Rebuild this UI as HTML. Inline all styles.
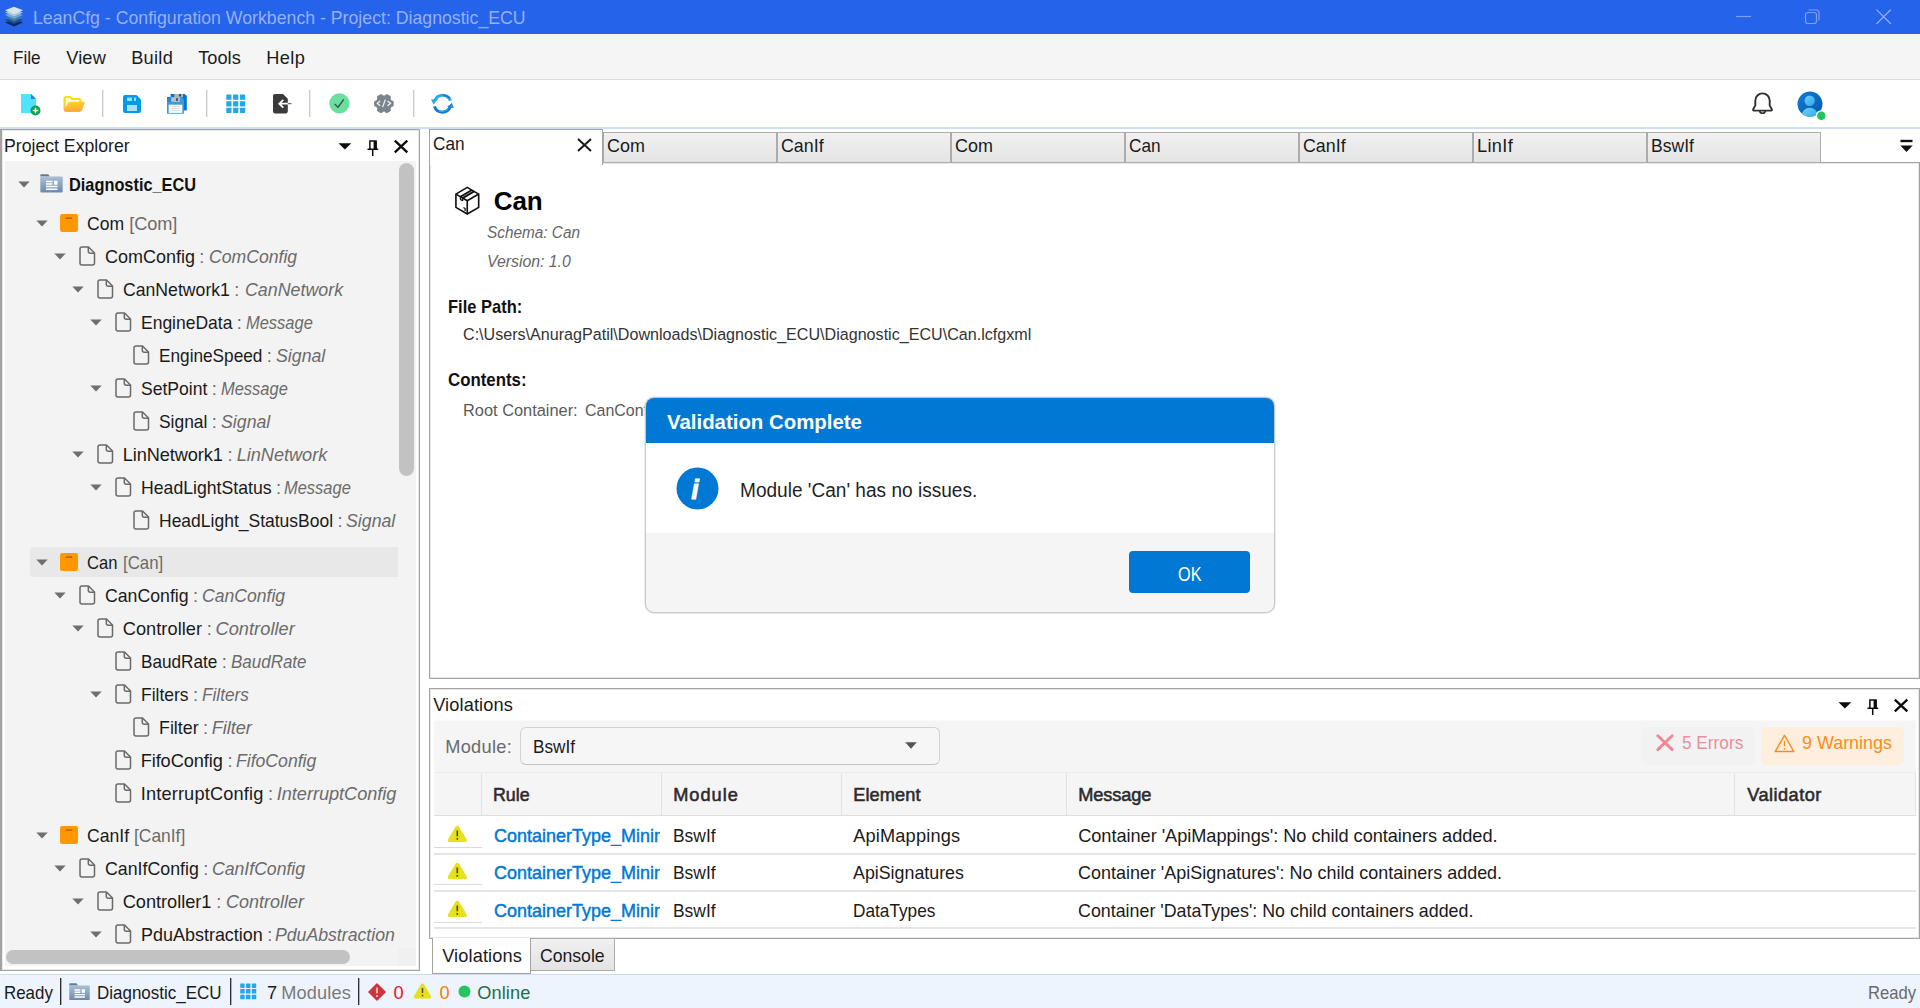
<!DOCTYPE html>
<html lang="en"><head><meta charset="utf-8"><title>LeanCfg - Configuration Workbench - Project: Diagnostic_ECU</title>
<style>
html,body{margin:0;padding:0;}
body{width:1920px;height:1008px;position:relative;overflow:hidden;background:#fff;font-family:"Liberation Sans",sans-serif;}
.t{position:absolute;white-space:pre;display:block;}
div,svg{box-sizing:border-box;}
svg{position:absolute;overflow:visible;}
</style></head><body>
<div style="position:absolute;left:0px;top:0px;width:1920px;height:34px;background:#2563eb;"></div><svg style="left:4px;top:6px" width="20" height="21" viewBox="0 0 20 21">
<path d="M10 13 L19 16.5 L10 20.5 L1 16.5Z" fill="#0d2b5e"/>
<path d="M10 10.5 L19 14 L10 18 L1 14Z" fill="#1d4f91"/>
<path d="M10 8 L19 11.5 L10 15.5 L1 11.5Z" fill="#3b78b8"/>
<path d="M10 5.5 L19 9 L10 13 L1 9Z" fill="#6fa3cf"/>
<path d="M10 3 L19 6.5 L10 10.5 L1 6.5Z" fill="#a4c8df"/>
<path d="M10 0.8 L19 4.3 L10 8.3 L1 4.3Z" fill="#d5e6ea"/>
</svg><span class="t" style="left:33.2px;top:8px;font-size:18.2px;line-height:20px;transform:scaleX(0.9733);transform-origin:0 0;color:#97b0f4;">LeanCfg - Configuration Workbench - Project: Diagnostic_ECU</span><svg style="left:1730px;top:5px" width="170" height="24" viewBox="0 0 170 24" fill="none" stroke="#7f9ff2" stroke-width="1.2">
<path d="M6 11.5 H21"/>
<rect x="75.5" y="7.5" width="11" height="11" rx="2.5"/><path d="M78.5 5 H86 a3 3 0 0 1 3 3 V15.5"/>
<path d="M146.5 4.6 L160.8 18.9 M160.8 4.6 L146.5 18.9" stroke="#9fb6f6" stroke-width="1.25"/>
</svg><div style="position:absolute;left:0px;top:34px;width:1920px;height:46px;background:#f5f5f5;border-bottom:1px solid #dcdcdc;"></div><span class="t" style="left:13.2px;top:48px;font-size:18.2px;line-height:20px;transform:scaleX(0.9416);transform-origin:0 0;color:#1b1b1b;">File</span><span class="t" style="left:66.2px;top:48px;font-size:18.2px;line-height:20px;letter-spacing:0.169px;color:#1b1b1b;">View</span><span class="t" style="left:131.2px;top:48px;font-size:18.2px;line-height:20px;letter-spacing:0.287px;color:#1b1b1b;">Build</span><span class="t" style="left:198.2px;top:48px;font-size:18.2px;line-height:20px;letter-spacing:0.033px;color:#1b1b1b;">Tools</span><span class="t" style="left:266.2px;top:48px;font-size:18.2px;line-height:20px;letter-spacing:0.398px;color:#1b1b1b;">Help</span><div style="position:absolute;left:0px;top:80px;width:1920px;height:48px;background:#fff;"></div><div style="position:absolute;left:0px;top:127px;width:1920px;height:2px;background:#cfe0f5;"></div><div style="position:absolute;left:102px;top:90px;width:2px;height:27px;background:linear-gradient(90deg,#cbcbcb 50%,#ececec 50%);"></div><div style="position:absolute;left:206px;top:90px;width:2px;height:27px;background:linear-gradient(90deg,#cbcbcb 50%,#ececec 50%);"></div><div style="position:absolute;left:309px;top:90px;width:2px;height:27px;background:linear-gradient(90deg,#cbcbcb 50%,#ececec 50%);"></div><div style="position:absolute;left:413px;top:90px;width:2px;height:27px;background:linear-gradient(90deg,#cbcbcb 50%,#ececec 50%);"></div><svg style="left:20px;top:93px" width="22" height="24" viewBox="0 0 22 24">
<path d="M1 1 H11 L16 6 V20 H1Z" fill="#4fe3ff"/><path d="M11 1 L16 6 H11Z" fill="#2f7fd9"/>
<circle cx="15.5" cy="17.5" r="5" fill="#10a050"/><path d="M15.5 14.7 V20.3 M12.7 17.5 H18.3" stroke="#fff" stroke-width="1.4"/></svg><svg style="left:63px;top:95px" width="23" height="18" viewBox="0 0 23 18">
<defs><linearGradient id="fo" x1="0" y1="0" x2="0" y2="1"><stop offset="0" stop-color="#ffd21f"/><stop offset="1" stop-color="#ffa53c"/></linearGradient>
<linearGradient id="fb" x1="0" y1="0" x2="0" y2="1"><stop offset="0" stop-color="#fbe200"/><stop offset="0.55" stop-color="#ffd12a"/><stop offset="1" stop-color="#ffab3a"/></linearGradient></defs>
<path d="M0.5 3.6 a2.6 2.6 0 0 1 2.6 -2.6 H6.8 a2 2 0 0 1 1.4 0.6 L9.6 2.9 H15.9 a2.6 2.6 0 0 1 2.6 2.6 V14 a2.8 2.8 0 0 1 -2.8 2.8 H3.3 a2.8 2.8 0 0 1 -2.8 -2.8Z" fill="url(#fb)"/>
<path d="M2.7 4 a0.9 0.9 0 0 1 0.9 -0.9 H6.6 L8.6 5 H15.6 a0.8 0.8 0 0 1 0.8 0.8 V8 H5.5 L2.7 13Z" fill="#fffbe3"/>
<path d="M7.2 6.8 H20.6 a1.1 1.1 0 0 1 1.05 1.45 L19.1 15 a2.7 2.7 0 0 1 -2.5 1.8 H3.3 a2.8 2.8 0 0 1 -2.4 -1.4 L2.2 14.6 L4.6 8.6 a2.8 2.8 0 0 1 2.6 -1.8Z" fill="url(#fo)"/></svg><svg style="left:123px;top:95px" width="18" height="18" viewBox="0 0 18 18">
<path d="M0 2 a2 2 0 0 1 2-2 H13.5 L18 4.5 V16 a2 2 0 0 1 -2 2 H2 a2 2 0 0 1 -2-2Z" fill="#039be5"/>
<rect x="4" y="2.5" width="5" height="3.5" fill="#9bdcfb"/><rect x="11" y="2.5" width="2" height="3.5" fill="#9bdcfb"/>
<rect x="4" y="10" width="10" height="6" fill="#a9e0ff"/></svg><svg style="left:166px;top:93px" width="22" height="22" viewBox="0 0 22 22">
<path d="M4.6 0.9 H18.6 L20.8 3.1 V17.6 H4.6Z" fill="#0277c8"/>
<rect x="8.3" y="0.9" width="8.7" height="3.3" fill="#a9b4bc"/><rect x="13" y="1.2" width="2.1" height="2.2" fill="#39444e"/>
<path d="M1 4 H15.5 L17.9 6.4 V20.7 H1Z" fill="#3a9be3"/><rect x="1" y="4" width="4.4" height="5" fill="#2b88cf"/>
<rect x="5.2" y="4.2" width="8.6" height="4.7" fill="#b6c0c8"/><rect x="10" y="5" width="1.9" height="2.9" rx="0.4" fill="#46525c"/>
<rect x="2.7" y="11.7" width="13.6" height="8.2" fill="#fff"/><path d="M4.6 13.4 H14.4 M4.6 15.5 H14.4 M4.6 17.6 H14.4" stroke="#d3d8dc" stroke-width="0.9"/></svg><svg style="left:226px;top:94px" width="20" height="20" viewBox="0 0 20 20" fill="#22a7ea"><rect x="0.3" y="0.6" width="5.2" height="5.2" rx="0.4"/><rect x="7.1" y="0.6" width="5.2" height="5.2" rx="0.4"/><rect x="13.9" y="0.6" width="5.2" height="5.2" rx="0.4"/><rect x="0.3" y="7.199999999999999" width="5.2" height="5.2" rx="0.4"/><rect x="7.1" y="7.199999999999999" width="5.2" height="5.2" rx="0.4"/><rect x="13.9" y="7.199999999999999" width="5.2" height="5.2" rx="0.4"/><rect x="0.3" y="13.799999999999999" width="5.2" height="5.2" rx="0.4"/><rect x="7.1" y="13.799999999999999" width="5.2" height="5.2" rx="0.4"/><rect x="13.9" y="13.799999999999999" width="5.2" height="5.2" rx="0.4"/></svg><svg style="left:273px;top:94px" width="19" height="20" viewBox="0 0 19 20">
<path d="M0 1.8 a1.8 1.8 0 0 1 1.8-1.8 H10 L14.8 4.8 V17.6 a1.8 1.8 0 0 1 -1.8 1.8 H1.8 a1.8 1.8 0 0 1 -1.8-1.8Z" fill="#3b3b3b"/>
<path d="M18.3 9.7 H6.5 M10.3 5.8 L6.2 9.7 L10.3 13.6" stroke="#fff" stroke-width="1.7" fill="none"/><path d="M14.8 9.7 H18.5" stroke="#3b3b3b" stroke-width="0.9"/></svg><svg style="left:328.6px;top:93.4px" width="21" height="21" viewBox="0 0 21 21"><circle cx="10.4" cy="10.3" r="10.1" fill="#69e0a0"/>
<path d="M5.6 10.9 L9 14.2 L14.8 6.4" stroke="#3d4a44" stroke-width="1.3" fill="none"/></svg><svg style="left:373px;top:93px" width="22" height="22" viewBox="0 0 22 22">
<g fill="#7a848d"><circle cx="10.9" cy="10.65" r="8.2"/><rect x="7.7" y="0.85" width="6.4" height="6" rx="1.9" transform="rotate(30 10.9 10.65)"/><rect x="7.7" y="0.85" width="6.4" height="6" rx="1.9" transform="rotate(90 10.9 10.65)"/><rect x="7.7" y="0.85" width="6.4" height="6" rx="1.9" transform="rotate(150 10.9 10.65)"/><rect x="7.7" y="0.85" width="6.4" height="6" rx="1.9" transform="rotate(210 10.9 10.65)"/><rect x="7.7" y="0.85" width="6.4" height="6" rx="1.9" transform="rotate(270 10.9 10.65)"/><rect x="7.7" y="0.85" width="6.4" height="6" rx="1.9" transform="rotate(330 10.9 10.65)"/></g>
<path d="M7.2 8 L4.3 10.35 L7.2 12.7 M14.6 8 L17.5 10.35 L14.6 12.7 M12.3 6.6 L9.6 14.1" stroke="#eef1f3" stroke-width="1.3" fill="none"/></svg><svg style="left:431px;top:93px" width="23" height="21" viewBox="0 0 23 21" fill="none">
<path d="M19.5 7.6 A8.4 8.4 0 0 0 3.9 7.4" stroke="#2aa9e6" stroke-width="3"/>
<path d="M18.6 5.2 A8.4 8.4 0 0 0 12 2.2" stroke="#1479d2" stroke-width="1.4"/>
<path d="M3.4 13.4 A8.4 8.4 0 0 0 19.3 13.6" stroke="#1479d2" stroke-width="3"/>
<path d="M8 17.6 A8.4 8.4 0 0 0 17.2 15.8" stroke="#2aa9e6" stroke-width="1.4"/>
<path d="M0 6.6 L6.9 6 L2.6 11.4Z" fill="#2aa9e6"/>
<path d="M22.9 14.9 L16.1 13.9 L20.9 9.7Z" fill="#1d8fde"/></svg><svg style="left:1751px;top:92px" width="23" height="24" viewBox="0 0 23 24" fill="none" stroke="#303030" stroke-width="1.9" stroke-linejoin="round">
<path d="M11.5 1.4 a7.2 7.2 0 0 1 7.2 7.2 V13.4 L20.9 17.5 a0.8 0.8 0 0 1 -0.7 1.1 H2.8 a0.8 0.8 0 0 1 -0.7 -1.1 L4.3 13.4 V8.6 a7.2 7.2 0 0 1 7.2-7.2Z"/>
<path d="M8.6 19 a3 3 0 0 0 5.8 0" stroke-width="1.7"/></svg><svg style="left:1797.2px;top:90.6px" width="28" height="28" viewBox="0 0 28 28">
<defs><linearGradient id="ua" x1="0" y1="0" x2="1" y2="1"><stop offset="0" stop-color="#0f7bd6"/><stop offset="1" stop-color="#0659ad"/></linearGradient>
<linearGradient id="ub" x1="0" y1="0" x2="1" y2="1"><stop offset="0" stop-color="#72d2fb"/><stop offset="1" stop-color="#2aa3e6"/></linearGradient>
<clipPath id="uc"><circle cx="13" cy="13.1" r="12.5"/></clipPath></defs>
<circle cx="13" cy="13.1" r="12.5" fill="url(#ua)"/>
<g clip-path="url(#uc)"><circle cx="12.7" cy="9.7" r="5.2" fill="url(#ub)"/><path d="M4.8 24.5 a8 7.8 0 0 1 16 0 V28 H4.8Z" fill="url(#ub)"/></g>
<circle cx="24.3" cy="24.7" r="4.9" fill="#22c55e" stroke="#fff" stroke-width="1.2"/></svg><div style="position:absolute;left:0px;top:129px;width:420px;height:842px;background:#fff;border:1px solid #a3a3a3;border-left-width:2px;box-shadow:inset 0 0 0 1px rgba(150,150,150,0.22);"></div><span class="t" style="left:4.2px;top:136px;font-size:18.2px;line-height:20px;transform:scaleX(0.9707);transform-origin:0 0;color:#1a1a1a;">Project Explorer</span><svg style="left:338px;top:139px" width="72" height="18" viewBox="0 0 72 18">
<path d="M0.5 4.2 H13.3 L6.9 10.6Z" fill="#0c0c0c"/>
<path d="M31.9 10 V2 H38 V10 M29.5 10.3 H40.2 M34.7 10.5 V17" stroke="#0c0c0c" stroke-width="1.5" fill="none"/><rect x="35.6" y="2" width="3.1" height="8" fill="#0c0c0c"/>
<path d="M56.8 1.6 L69.3 13.4 M69.3 1.6 L56.8 13.4" stroke="#0c0c0c" stroke-width="2.3" fill="none"/></svg><div style="position:absolute;left:5px;top:161px;width:411px;height:805px;background:#f3f3f3;"></div><div style="position:absolute;left:399px;top:163px;width:15px;height:313px;background:#c2c2c2;border-radius:7.5px;"></div><div style="position:absolute;left:6px;top:950px;width:344px;height:14px;background:#c2c2c2;border-radius:7px;"></div><div style="position:absolute;left:398px;top:948px;width:18px;height:18px;background:#f0f0f0;"></div><div style="position:absolute;left:30px;top:547px;width:368px;height:30px;background:#e8e8e8;border-radius:4px 0 0 4px;"></div><svg style="left:18px;top:180.5px" width="12" height="7" viewBox="0 0 12 7"><path d="M0.3 0.4 H11.7 L6 6.6Z" fill="#6e6e6e"/></svg><svg style="left:40px;top:174px" width="23" height="19" viewBox="0 0 23 19">
<defs><linearGradient id="pg1" x1="0" y1="0" x2="0" y2="1"><stop offset="0" stop-color="#a9bfd8"/><stop offset="1" stop-color="#6d8aaa"/></linearGradient></defs>
<path d="M0.3 1.2 a1 1 0 0 1 1-1 H8.2 L10 2.6 H0.3Z" fill="#5f7d8e"/>
<rect x="0.3" y="2.6" width="22.4" height="16" rx="1" fill="url(#pg1)"/>
<path d="M6 7.6 H12.5 M6 10 H12.5 M6 12.6 H17.5 M6 15.2 H17.5" stroke="#fff" stroke-width="1.5"/><rect x="14" y="6.8" width="3.5" height="3.9" fill="#fff"/></svg><span class="t" style="left:69.2px;top:175px;font-size:18.2px;line-height:20px;transform:scaleX(0.8982);transform-origin:0 0;color:#111;font-weight:bold;">Diagnostic_ECU</span><svg style="left:36px;top:219.5px" width="12" height="7" viewBox="0 0 12 7"><path d="M0.3 0.4 H11.7 L6 6.6Z" fill="#6e6e6e"/></svg><svg style="left:60px;top:214px" width="18" height="18" viewBox="0 0 18 18"><rect x="0" y="0" width="18" height="18" rx="2.2" fill="#ff9800"/><rect x="5.6" y="3.3" width="6.6" height="1.7" fill="#b86a00"/></svg><span class="t" style="left:86.7px;top:214px;font-size:18.2px;line-height:20px;transform:scaleX(0.9660);transform-origin:0 0;color:#1a1a1a;">Com</span><span class="t" style="left:129.2px;top:214px;font-size:18.2px;line-height:20px;letter-spacing:-0.104px;color:#6b6b6b;">[Com]</span><svg style="left:54px;top:252.5px" width="12" height="7" viewBox="0 0 12 7"><path d="M0.3 0.4 H11.7 L6 6.6Z" fill="#6e6e6e"/></svg><svg style="left:78.5px;top:246px" width="17" height="20" viewBox="0 0 17 20" fill="none" stroke="#6a6a6a" stroke-width="1.5" stroke-linejoin="round"><path d="M3 1 H9.5 L15.5 7 V17 a2 2 0 0 1 -2 2 H3 a2 2 0 0 1 -2-2 V3 a2 2 0 0 1 2-2Z"/><path d="M9.3 1.2 V5.2 a2 2 0 0 0 2 2 H15.3"/></svg><span class="t" style="left:104.7px;top:247px;font-size:18.2px;line-height:20px;transform:scaleX(0.9881);transform-origin:0 0;color:#1a1a1a;">ComConfig</span><span class="t" style="left:199.3px;top:247px;font-size:18.2px;line-height:20px;color:#6b6b6b;">:</span><span class="t" style="left:208.7px;top:247px;font-size:18.2px;line-height:20px;transform:scaleX(0.9683);transform-origin:0 0;color:#6b6b6b;font-style:italic;">ComConfig</span><svg style="left:72px;top:285.5px" width="12" height="7" viewBox="0 0 12 7"><path d="M0.3 0.4 H11.7 L6 6.6Z" fill="#6e6e6e"/></svg><svg style="left:96.5px;top:279px" width="17" height="20" viewBox="0 0 17 20" fill="none" stroke="#6a6a6a" stroke-width="1.5" stroke-linejoin="round"><path d="M3 1 H9.5 L15.5 7 V17 a2 2 0 0 1 -2 2 H3 a2 2 0 0 1 -2-2 V3 a2 2 0 0 1 2-2Z"/><path d="M9.3 1.2 V5.2 a2 2 0 0 0 2 2 H15.3"/></svg><span class="t" style="left:122.7px;top:280px;font-size:18.2px;line-height:20px;transform:scaleX(0.9702);transform-origin:0 0;color:#1a1a1a;">CanNetwork1</span><span class="t" style="left:234.3px;top:280px;font-size:18.2px;line-height:20px;color:#6b6b6b;">:</span><span class="t" style="left:244.7px;top:280px;font-size:18.2px;line-height:20px;transform:scaleX(0.9802);transform-origin:0 0;color:#6b6b6b;font-style:italic;">CanNetwork</span><svg style="left:90px;top:318.5px" width="12" height="7" viewBox="0 0 12 7"><path d="M0.3 0.4 H11.7 L6 6.6Z" fill="#6e6e6e"/></svg><svg style="left:114.5px;top:312px" width="17" height="20" viewBox="0 0 17 20" fill="none" stroke="#6a6a6a" stroke-width="1.5" stroke-linejoin="round"><path d="M3 1 H9.5 L15.5 7 V17 a2 2 0 0 1 -2 2 H3 a2 2 0 0 1 -2-2 V3 a2 2 0 0 1 2-2Z"/><path d="M9.3 1.2 V5.2 a2 2 0 0 0 2 2 H15.3"/></svg><span class="t" style="left:140.7px;top:313px;font-size:18.2px;line-height:20px;transform:scaleX(0.9615);transform-origin:0 0;color:#1a1a1a;">EngineData</span><span class="t" style="left:236.8px;top:313px;font-size:18.2px;line-height:20px;color:#6b6b6b;">:</span><span class="t" style="left:245.5px;top:313px;font-size:18.2px;line-height:20px;transform:scaleX(0.9050);transform-origin:0 0;color:#6b6b6b;font-style:italic;">Message</span><svg style="left:132.5px;top:345px" width="17" height="20" viewBox="0 0 17 20" fill="none" stroke="#6a6a6a" stroke-width="1.5" stroke-linejoin="round"><path d="M3 1 H9.5 L15.5 7 V17 a2 2 0 0 1 -2 2 H3 a2 2 0 0 1 -2-2 V3 a2 2 0 0 1 2-2Z"/><path d="M9.3 1.2 V5.2 a2 2 0 0 0 2 2 H15.3"/></svg><span class="t" style="left:158.7px;top:346px;font-size:18.2px;line-height:20px;transform:scaleX(0.9466);transform-origin:0 0;color:#1a1a1a;">EngineSpeed</span><span class="t" style="left:266.8px;top:346px;font-size:18.2px;line-height:20px;color:#6b6b6b;">:</span><span class="t" style="left:275.5px;top:346px;font-size:18.2px;line-height:20px;transform:scaleX(0.9750);transform-origin:0 0;color:#6b6b6b;font-style:italic;">Signal</span><svg style="left:90px;top:384.5px" width="12" height="7" viewBox="0 0 12 7"><path d="M0.3 0.4 H11.7 L6 6.6Z" fill="#6e6e6e"/></svg><svg style="left:114.5px;top:378px" width="17" height="20" viewBox="0 0 17 20" fill="none" stroke="#6a6a6a" stroke-width="1.5" stroke-linejoin="round"><path d="M3 1 H9.5 L15.5 7 V17 a2 2 0 0 1 -2 2 H3 a2 2 0 0 1 -2-2 V3 a2 2 0 0 1 2-2Z"/><path d="M9.3 1.2 V5.2 a2 2 0 0 0 2 2 H15.3"/></svg><span class="t" style="left:140.7px;top:379px;font-size:18.2px;line-height:20px;transform:scaleX(0.9656);transform-origin:0 0;color:#1a1a1a;">SetPoint</span><span class="t" style="left:211.8px;top:379px;font-size:18.2px;line-height:20px;color:#6b6b6b;">:</span><span class="t" style="left:220.5px;top:379px;font-size:18.2px;line-height:20px;transform:scaleX(0.9050);transform-origin:0 0;color:#6b6b6b;font-style:italic;">Message</span><svg style="left:132.5px;top:411px" width="17" height="20" viewBox="0 0 17 20" fill="none" stroke="#6a6a6a" stroke-width="1.5" stroke-linejoin="round"><path d="M3 1 H9.5 L15.5 7 V17 a2 2 0 0 1 -2 2 H3 a2 2 0 0 1 -2-2 V3 a2 2 0 0 1 2-2Z"/><path d="M9.3 1.2 V5.2 a2 2 0 0 0 2 2 H15.3"/></svg><span class="t" style="left:158.7px;top:412px;font-size:18.2px;line-height:20px;transform:scaleX(0.9572);transform-origin:0 0;color:#1a1a1a;">Signal</span><span class="t" style="left:211.8px;top:412px;font-size:18.2px;line-height:20px;color:#6b6b6b;">:</span><span class="t" style="left:220.5px;top:412px;font-size:18.2px;line-height:20px;transform:scaleX(0.9750);transform-origin:0 0;color:#6b6b6b;font-style:italic;">Signal</span><svg style="left:72px;top:450.5px" width="12" height="7" viewBox="0 0 12 7"><path d="M0.3 0.4 H11.7 L6 6.6Z" fill="#6e6e6e"/></svg><svg style="left:96.5px;top:444px" width="17" height="20" viewBox="0 0 17 20" fill="none" stroke="#6a6a6a" stroke-width="1.5" stroke-linejoin="round"><path d="M3 1 H9.5 L15.5 7 V17 a2 2 0 0 1 -2 2 H3 a2 2 0 0 1 -2-2 V3 a2 2 0 0 1 2-2Z"/><path d="M9.3 1.2 V5.2 a2 2 0 0 0 2 2 H15.3"/></svg><span class="t" style="left:122.7px;top:445px;font-size:18.2px;line-height:20px;letter-spacing:-0.099px;color:#1a1a1a;">LinNetwork1</span><span class="t" style="left:227.5px;top:445px;font-size:18.2px;line-height:20px;color:#6b6b6b;">:</span><span class="t" style="left:236.7px;top:445px;font-size:18.2px;line-height:20px;letter-spacing:-0.043px;color:#6b6b6b;font-style:italic;">LinNetwork</span><svg style="left:90px;top:483.5px" width="12" height="7" viewBox="0 0 12 7"><path d="M0.3 0.4 H11.7 L6 6.6Z" fill="#6e6e6e"/></svg><svg style="left:114.5px;top:477px" width="17" height="20" viewBox="0 0 17 20" fill="none" stroke="#6a6a6a" stroke-width="1.5" stroke-linejoin="round"><path d="M3 1 H9.5 L15.5 7 V17 a2 2 0 0 1 -2 2 H3 a2 2 0 0 1 -2-2 V3 a2 2 0 0 1 2-2Z"/><path d="M9.3 1.2 V5.2 a2 2 0 0 0 2 2 H15.3"/></svg><span class="t" style="left:140.7px;top:478px;font-size:18.2px;line-height:20px;transform:scaleX(0.9711);transform-origin:0 0;color:#1a1a1a;">HeadLightStatus</span><span class="t" style="left:276.0px;top:478px;font-size:18.2px;line-height:20px;color:#6b6b6b;">:</span><span class="t" style="left:284.2px;top:478px;font-size:18.2px;line-height:20px;transform:scaleX(0.9050);transform-origin:0 0;color:#6b6b6b;font-style:italic;">Message</span><svg style="left:132.5px;top:510px" width="17" height="20" viewBox="0 0 17 20" fill="none" stroke="#6a6a6a" stroke-width="1.5" stroke-linejoin="round"><path d="M3 1 H9.5 L15.5 7 V17 a2 2 0 0 1 -2 2 H3 a2 2 0 0 1 -2-2 V3 a2 2 0 0 1 2-2Z"/><path d="M9.3 1.2 V5.2 a2 2 0 0 0 2 2 H15.3"/></svg><span class="t" style="left:158.7px;top:511px;font-size:18.2px;line-height:20px;transform:scaleX(0.9619);transform-origin:0 0;color:#1a1a1a;">HeadLight_StatusBool</span><span class="t" style="left:337.5px;top:511px;font-size:18.2px;line-height:20px;color:#6b6b6b;">:</span><span class="t" style="left:345.5px;top:511px;font-size:18.2px;line-height:20px;transform:scaleX(0.9750);transform-origin:0 0;color:#6b6b6b;font-style:italic;">Signal</span><svg style="left:36px;top:558.5px" width="12" height="7" viewBox="0 0 12 7"><path d="M0.3 0.4 H11.7 L6 6.6Z" fill="#6e6e6e"/></svg><svg style="left:60px;top:553px" width="18" height="18" viewBox="0 0 18 18"><rect x="0" y="0" width="18" height="18" rx="2.2" fill="#ff9800"/><rect x="5.6" y="3.3" width="6.6" height="1.7" fill="#b86a00"/></svg><span class="t" style="left:86.7px;top:553px;font-size:18.2px;line-height:20px;transform:scaleX(0.9109);transform-origin:0 0;color:#1a1a1a;">Can</span><span class="t" style="left:123.0px;top:553px;font-size:18.2px;line-height:20px;transform:scaleX(0.9268);transform-origin:0 0;color:#6b6b6b;">[Can]</span><svg style="left:54px;top:591.5px" width="12" height="7" viewBox="0 0 12 7"><path d="M0.3 0.4 H11.7 L6 6.6Z" fill="#6e6e6e"/></svg><svg style="left:78.5px;top:585px" width="17" height="20" viewBox="0 0 17 20" fill="none" stroke="#6a6a6a" stroke-width="1.5" stroke-linejoin="round"><path d="M3 1 H9.5 L15.5 7 V17 a2 2 0 0 1 -2 2 H3 a2 2 0 0 1 -2-2 V3 a2 2 0 0 1 2-2Z"/><path d="M9.3 1.2 V5.2 a2 2 0 0 0 2 2 H15.3"/></svg><span class="t" style="left:104.7px;top:586px;font-size:18.2px;line-height:20px;transform:scaleX(0.9726);transform-origin:0 0;color:#1a1a1a;">CanConfig</span><span class="t" style="left:193.0px;top:586px;font-size:18.2px;line-height:20px;color:#6b6b6b;">:</span><span class="t" style="left:201.7px;top:586px;font-size:18.2px;line-height:20px;transform:scaleX(0.9668);transform-origin:0 0;color:#6b6b6b;font-style:italic;">CanConfig</span><svg style="left:72px;top:624.5px" width="12" height="7" viewBox="0 0 12 7"><path d="M0.3 0.4 H11.7 L6 6.6Z" fill="#6e6e6e"/></svg><svg style="left:96.5px;top:618px" width="17" height="20" viewBox="0 0 17 20" fill="none" stroke="#6a6a6a" stroke-width="1.5" stroke-linejoin="round"><path d="M3 1 H9.5 L15.5 7 V17 a2 2 0 0 1 -2 2 H3 a2 2 0 0 1 -2-2 V3 a2 2 0 0 1 2-2Z"/><path d="M9.3 1.2 V5.2 a2 2 0 0 0 2 2 H15.3"/></svg><span class="t" style="left:122.7px;top:619px;font-size:18.2px;line-height:20px;letter-spacing:0.062px;color:#1a1a1a;">Controller</span><span class="t" style="left:206.8px;top:619px;font-size:18.2px;line-height:20px;color:#6b6b6b;">:</span><span class="t" style="left:215.5px;top:619px;font-size:18.2px;line-height:20px;letter-spacing:0.051px;color:#6b6b6b;font-style:italic;">Controller</span><svg style="left:114.5px;top:651px" width="17" height="20" viewBox="0 0 17 20" fill="none" stroke="#6a6a6a" stroke-width="1.5" stroke-linejoin="round"><path d="M3 1 H9.5 L15.5 7 V17 a2 2 0 0 1 -2 2 H3 a2 2 0 0 1 -2-2 V3 a2 2 0 0 1 2-2Z"/><path d="M9.3 1.2 V5.2 a2 2 0 0 0 2 2 H15.3"/></svg><span class="t" style="left:140.7px;top:652px;font-size:18.2px;line-height:20px;transform:scaleX(0.9443);transform-origin:0 0;color:#1a1a1a;">BaudRate</span><span class="t" style="left:221.8px;top:652px;font-size:18.2px;line-height:20px;color:#6b6b6b;">:</span><span class="t" style="left:230.5px;top:652px;font-size:18.2px;line-height:20px;transform:scaleX(0.9332);transform-origin:0 0;color:#6b6b6b;font-style:italic;">BaudRate</span><svg style="left:90px;top:690.5px" width="12" height="7" viewBox="0 0 12 7"><path d="M0.3 0.4 H11.7 L6 6.6Z" fill="#6e6e6e"/></svg><svg style="left:114.5px;top:684px" width="17" height="20" viewBox="0 0 17 20" fill="none" stroke="#6a6a6a" stroke-width="1.5" stroke-linejoin="round"><path d="M3 1 H9.5 L15.5 7 V17 a2 2 0 0 1 -2 2 H3 a2 2 0 0 1 -2-2 V3 a2 2 0 0 1 2-2Z"/><path d="M9.3 1.2 V5.2 a2 2 0 0 0 2 2 H15.3"/></svg><span class="t" style="left:140.7px;top:685px;font-size:18.2px;line-height:20px;transform:scaleX(0.9613);transform-origin:0 0;color:#1a1a1a;">Filters</span><span class="t" style="left:193.0px;top:685px;font-size:18.2px;line-height:20px;color:#6b6b6b;">:</span><span class="t" style="left:201.7px;top:685px;font-size:18.2px;line-height:20px;transform:scaleX(0.9452);transform-origin:0 0;color:#6b6b6b;font-style:italic;">Filters</span><svg style="left:132.5px;top:717px" width="17" height="20" viewBox="0 0 17 20" fill="none" stroke="#6a6a6a" stroke-width="1.5" stroke-linejoin="round"><path d="M3 1 H9.5 L15.5 7 V17 a2 2 0 0 1 -2 2 H3 a2 2 0 0 1 -2-2 V3 a2 2 0 0 1 2-2Z"/><path d="M9.3 1.2 V5.2 a2 2 0 0 0 2 2 H15.3"/></svg><span class="t" style="left:158.7px;top:718px;font-size:18.2px;line-height:20px;transform:scaleX(0.9797);transform-origin:0 0;color:#1a1a1a;">Filter</span><span class="t" style="left:203.0px;top:718px;font-size:18.2px;line-height:20px;color:#6b6b6b;">:</span><span class="t" style="left:211.7px;top:718px;font-size:18.2px;line-height:20px;letter-spacing:-0.064px;color:#6b6b6b;font-style:italic;">Filter</span><svg style="left:114.5px;top:750px" width="17" height="20" viewBox="0 0 17 20" fill="none" stroke="#6a6a6a" stroke-width="1.5" stroke-linejoin="round"><path d="M3 1 H9.5 L15.5 7 V17 a2 2 0 0 1 -2 2 H3 a2 2 0 0 1 -2-2 V3 a2 2 0 0 1 2-2Z"/><path d="M9.3 1.2 V5.2 a2 2 0 0 0 2 2 H15.3"/></svg><span class="t" style="left:140.7px;top:751px;font-size:18.2px;line-height:20px;letter-spacing:-0.090px;color:#1a1a1a;">FifoConfig</span><span class="t" style="left:227.5px;top:751px;font-size:18.2px;line-height:20px;color:#6b6b6b;">:</span><span class="t" style="left:236.2px;top:751px;font-size:18.2px;line-height:20px;transform:scaleX(0.9686);transform-origin:0 0;color:#6b6b6b;font-style:italic;">FifoConfig</span><svg style="left:114.5px;top:783px" width="17" height="20" viewBox="0 0 17 20" fill="none" stroke="#6a6a6a" stroke-width="1.5" stroke-linejoin="round"><path d="M3 1 H9.5 L15.5 7 V17 a2 2 0 0 1 -2 2 H3 a2 2 0 0 1 -2-2 V3 a2 2 0 0 1 2-2Z"/><path d="M9.3 1.2 V5.2 a2 2 0 0 0 2 2 H15.3"/></svg><span class="t" style="left:140.7px;top:784px;font-size:18.2px;line-height:20px;letter-spacing:0.163px;color:#1a1a1a;">InterruptConfig</span><span class="t" style="left:268.0px;top:784px;font-size:18.2px;line-height:20px;color:#6b6b6b;">:</span><span class="t" style="left:276.7px;top:784px;font-size:18.2px;line-height:20px;letter-spacing:-0.037px;color:#6b6b6b;font-style:italic;">InterruptConfig</span><svg style="left:36px;top:831.5px" width="12" height="7" viewBox="0 0 12 7"><path d="M0.3 0.4 H11.7 L6 6.6Z" fill="#6e6e6e"/></svg><svg style="left:60px;top:826px" width="18" height="18" viewBox="0 0 18 18"><rect x="0" y="0" width="18" height="18" rx="2.2" fill="#ff9800"/><rect x="5.6" y="3.3" width="6.6" height="1.7" fill="#b86a00"/></svg><span class="t" style="left:86.7px;top:826px;font-size:18.2px;line-height:20px;transform:scaleX(0.9682);transform-origin:0 0;color:#1a1a1a;">CanIf</span><span class="t" style="left:133.5px;top:826px;font-size:18.2px;line-height:20px;transform:scaleX(0.9575);transform-origin:0 0;color:#6b6b6b;">[CanIf]</span><svg style="left:54px;top:864.5px" width="12" height="7" viewBox="0 0 12 7"><path d="M0.3 0.4 H11.7 L6 6.6Z" fill="#6e6e6e"/></svg><svg style="left:78.5px;top:858px" width="17" height="20" viewBox="0 0 17 20" fill="none" stroke="#6a6a6a" stroke-width="1.5" stroke-linejoin="round"><path d="M3 1 H9.5 L15.5 7 V17 a2 2 0 0 1 -2 2 H3 a2 2 0 0 1 -2-2 V3 a2 2 0 0 1 2-2Z"/><path d="M9.3 1.2 V5.2 a2 2 0 0 0 2 2 H15.3"/></svg><span class="t" style="left:104.7px;top:859px;font-size:18.2px;line-height:20px;transform:scaleX(0.9766);transform-origin:0 0;color:#1a1a1a;">CanIfConfig</span><span class="t" style="left:203.2px;top:859px;font-size:18.2px;line-height:20px;color:#6b6b6b;">:</span><span class="t" style="left:211.9px;top:859px;font-size:18.2px;line-height:20px;transform:scaleX(0.9693);transform-origin:0 0;color:#6b6b6b;font-style:italic;">CanIfConfig</span><svg style="left:72px;top:897.5px" width="12" height="7" viewBox="0 0 12 7"><path d="M0.3 0.4 H11.7 L6 6.6Z" fill="#6e6e6e"/></svg><svg style="left:96.5px;top:891px" width="17" height="20" viewBox="0 0 17 20" fill="none" stroke="#6a6a6a" stroke-width="1.5" stroke-linejoin="round"><path d="M3 1 H9.5 L15.5 7 V17 a2 2 0 0 1 -2 2 H3 a2 2 0 0 1 -2-2 V3 a2 2 0 0 1 2-2Z"/><path d="M9.3 1.2 V5.2 a2 2 0 0 0 2 2 H15.3"/></svg><span class="t" style="left:122.7px;top:892px;font-size:18.2px;line-height:20px;letter-spacing:-0.017px;color:#1a1a1a;">Controller1</span><span class="t" style="left:216.2px;top:892px;font-size:18.2px;line-height:20px;color:#6b6b6b;">:</span><span class="t" style="left:225.9px;top:892px;font-size:18.2px;line-height:20px;transform:scaleX(0.9880);transform-origin:0 0;color:#6b6b6b;font-style:italic;">Controller</span><svg style="left:90px;top:930.5px" width="12" height="7" viewBox="0 0 12 7"><path d="M0.3 0.4 H11.7 L6 6.6Z" fill="#6e6e6e"/></svg><svg style="left:114.5px;top:924px" width="17" height="20" viewBox="0 0 17 20" fill="none" stroke="#6a6a6a" stroke-width="1.5" stroke-linejoin="round"><path d="M3 1 H9.5 L15.5 7 V17 a2 2 0 0 1 -2 2 H3 a2 2 0 0 1 -2-2 V3 a2 2 0 0 1 2-2Z"/><path d="M9.3 1.2 V5.2 a2 2 0 0 0 2 2 H15.3"/></svg><span class="t" style="left:140.7px;top:925px;font-size:18.2px;line-height:20px;transform:scaleX(0.9875);transform-origin:0 0;color:#1a1a1a;">PduAbstraction</span><span class="t" style="left:267.2px;top:925px;font-size:18.2px;line-height:20px;color:#6b6b6b;">:</span><span class="t" style="left:275.2px;top:925px;font-size:18.2px;line-height:20px;transform:scaleX(0.9713);transform-origin:0 0;color:#6b6b6b;font-style:italic;">PduAbstraction</span><div style="position:absolute;left:429px;top:162px;width:1491px;height:517px;background:#fff;border:1px solid #a3a3a3;box-shadow:inset 0 0 0 1px rgba(150,150,150,0.22);"></div><div style="position:absolute;left:603px;top:132px;width:174px;height:31px;background:linear-gradient(#f1f1f1,#e4e4e4);border:1px solid #acacac;"></div><span class="t" style="left:606.9px;top:136px;font-size:18.2px;line-height:20px;transform:scaleX(0.9868);transform-origin:0 0;color:#1a1a1a;">Com</span><div style="position:absolute;left:777px;top:132px;width:174px;height:31px;background:linear-gradient(#f1f1f1,#e4e4e4);border:1px solid #acacac;"></div><span class="t" style="left:780.9px;top:136px;font-size:18.2px;line-height:20px;transform:scaleX(0.9797);transform-origin:0 0;color:#1a1a1a;">CanIf</span><div style="position:absolute;left:951px;top:132px;width:174px;height:31px;background:linear-gradient(#f1f1f1,#e4e4e4);border:1px solid #acacac;"></div><span class="t" style="left:954.9px;top:136px;font-size:18.2px;line-height:20px;transform:scaleX(0.9868);transform-origin:0 0;color:#1a1a1a;">Com</span><div style="position:absolute;left:1125px;top:132px;width:174px;height:31px;background:linear-gradient(#f1f1f1,#e4e4e4);border:1px solid #acacac;"></div><span class="t" style="left:1128.9px;top:136px;font-size:18.2px;line-height:20px;transform:scaleX(0.9468);transform-origin:0 0;color:#1a1a1a;">Can</span><div style="position:absolute;left:1299px;top:132px;width:174px;height:31px;background:linear-gradient(#f1f1f1,#e4e4e4);border:1px solid #acacac;"></div><span class="t" style="left:1302.9px;top:136px;font-size:18.2px;line-height:20px;transform:scaleX(0.9797);transform-origin:0 0;color:#1a1a1a;">CanIf</span><div style="position:absolute;left:1473px;top:132px;width:174px;height:31px;background:linear-gradient(#f1f1f1,#e4e4e4);border:1px solid #acacac;"></div><span class="t" style="left:1476.9px;top:136px;font-size:18.2px;line-height:20px;letter-spacing:0.377px;color:#1a1a1a;">LinIf</span><div style="position:absolute;left:1647px;top:132px;width:174px;height:31px;background:linear-gradient(#f1f1f1,#e4e4e4);border:1px solid #acacac;"></div><span class="t" style="left:1650.9px;top:136px;font-size:18.2px;line-height:20px;transform:scaleX(0.9647);transform-origin:0 0;color:#1a1a1a;">BswIf</span><div style="position:absolute;left:429px;top:129px;width:174px;height:36px;background:#fff;border:1px solid #a3a3a3;border-bottom:none;"></div><div style="position:absolute;left:430px;top:162px;width:172px;height:3px;background:#fff;"></div><span class="t" style="left:432.7px;top:134px;font-size:18.2px;line-height:20px;transform:scaleX(0.9468);transform-origin:0 0;color:#1a1a1a;">Can</span><svg style="left:577px;top:138px" width="15" height="14" viewBox="0 0 15 14"><path d="M1 1 L14 13 M14 1 L1 13" stroke="#1a1a1a" stroke-width="2" fill="none"/></svg><svg style="left:1900px;top:139px" width="13" height="14" viewBox="0 0 13 14"><rect x="0.5" y="0.8" width="12" height="2.4" fill="#111"/><path d="M0.3 6.6 H12.7 L6.5 13Z" fill="#111"/></svg><svg style="left:453.6px;top:185.7px" width="26.9" height="29.8" viewBox="0 0 28 31" fill="none" stroke="#111" stroke-width="1.7" stroke-linejoin="round">
<path d="M13.8 1.4 L25.7 8.4 V22.2 L13.8 29.2 L2 22.2 V8.4Z"/><path d="M2 8.4 L13.8 15.3 L25.7 8.4 M13.8 15.3 V29.2"/>
<path d="M18.6 4.2 L6.7 11.2 M20.9 5.6 L9 12.6" stroke-width="2"/><path d="M6.7 11.2 V14 L9 15.3 V12.6" stroke-width="1.3"/><path d="M9.8 22.4 L11.6 23.5 V26" stroke-width="1.3"/></svg><span class="t" style="left:493.84px;top:186px;font-size:26px;line-height:30px;letter-spacing:-0.157px;color:#000;font-weight:bold;">Can</span><span class="t" style="left:487.27px;top:223px;font-size:16.7px;line-height:19px;transform:scaleX(0.9195);transform-origin:0 0;color:#666;font-style:italic;">Schema: Can</span><span class="t" style="left:487.27px;top:251.5px;font-size:16.7px;line-height:19px;transform:scaleX(0.9472);transform-origin:0 0;color:#666;font-style:italic;">Version: 1.0</span><span class="t" style="left:448.2px;top:297px;font-size:18.2px;line-height:20px;transform:scaleX(0.9077);transform-origin:0 0;color:#111;font-weight:bold;">File Path:</span><span class="t" style="left:462.77px;top:325px;font-size:16.7px;line-height:19px;transform:scaleX(0.9649);transform-origin:0 0;color:#333;">C:\Users\AnuragPatil\Downloads\Diagnostic_ECU\Diagnostic_ECU\Can.lcfgxml</span><span class="t" style="left:448.2px;top:370px;font-size:18.2px;line-height:20px;transform:scaleX(0.9261);transform-origin:0 0;color:#111;font-weight:bold;">Contents:</span><span class="t" style="left:462.77px;top:401px;font-size:16.7px;line-height:19px;transform:scaleX(0.9810);transform-origin:0 0;color:#5a5a5a;">Root Container:</span><span class="t" style="left:585.27px;top:401px;font-size:16.7px;line-height:19px;transform:scaleX(0.9570);transform-origin:0 0;color:#5a5a5a;">CanConfig</span><div style="position:absolute;left:645px;top:397px;width:630px;height:216px;border:1px solid #c9c9c9;border-radius:9px;background:#f5f5f5;overflow:hidden;box-shadow:0 0 0 0.5px #ddd;"><div style="position:absolute;left:0;top:0;width:630px;height:45px;background:#0078d4;"></div><div style="position:absolute;left:0;top:45px;width:630px;height:90px;background:#fff;"></div></div><span class="t" style="left:667.07px;top:409.5px;font-size:21px;line-height:23px;transform:scaleX(0.9709);transform-origin:0 0;color:#fff;font-weight:bold;">Validation Complete</span><svg style="left:676px;top:467px" width="43" height="43" viewBox="0 0 43 43"><circle cx="21.5" cy="21.5" r="21" fill="#0078d4"/></svg><span class="t" style="left:691.2px;top:475px;font-size:27px;line-height:30px;color:#fff;font-weight:bold;font-style:italic;-webkit-text-stroke:0.9px #fff;">i</span><span class="t" style="left:739.63px;top:478.5px;font-size:19.5px;line-height:22px;transform:scaleX(0.9776);transform-origin:0 0;color:#1f1f1f;">Module &#x27;Can&#x27; has no issues.</span><div style="position:absolute;left:1129px;top:551px;width:121px;height:42px;background:#0078d4;border-radius:4px;"></div><span class="t" style="left:1178px;top:562.5px;font-size:19.5px;line-height:22px;transform:scaleX(0.8337);transform-origin:0 0;color:#fff;">OK</span><div style="position:absolute;left:429px;top:688px;width:1491px;height:251px;background:#fff;border:1px solid #a3a3a3;box-shadow:inset 0 0 0 1px rgba(150,150,150,0.22);"></div><span class="t" style="left:433.2px;top:695px;font-size:18.2px;line-height:20px;letter-spacing:0.119px;color:#1a1a1a;">Violations</span><svg style="left:1838px;top:697.6px" width="72" height="18" viewBox="0 0 72 18">
<path d="M0.5 4.2 H13.3 L6.9 10.6Z" fill="#0c0c0c"/>
<path d="M31.9 10 V2 H38 V10 M29.5 10.3 H40.2 M34.7 10.5 V17" stroke="#0c0c0c" stroke-width="1.5" fill="none"/><rect x="35.6" y="2" width="3.1" height="8" fill="#0c0c0c"/>
<path d="M56.8 1.6 L69.3 13.4 M69.3 1.6 L56.8 13.4" stroke="#0c0c0c" stroke-width="2.3" fill="none"/></svg><div style="position:absolute;left:434px;top:720px;width:1482px;height:52px;background:#f5f5f5;border-top:1px solid #fafafa;"></div><span class="t" style="left:445.2px;top:737px;font-size:18.2px;line-height:20px;letter-spacing:0.314px;color:#6a6a6a;">Module:</span><div style="position:absolute;left:520px;top:727px;width:420px;height:38px;background:#f6f6f6;border:1px solid #d2d2d2;border-bottom-color:#c4c4c4;border-radius:6px;"></div><span class="t" style="left:533.2px;top:737px;font-size:18.2px;line-height:20px;transform:scaleX(0.9467);transform-origin:0 0;color:#1a1a1a;">BswIf</span><svg style="left:905px;top:742px" width="12" height="7" viewBox="0 0 12 7"><path d="M0.2 0.3 H11.8 L6 6.8Z" fill="#555"/></svg><div style="position:absolute;left:1640.5px;top:727px;width:114px;height:38px;background:#f2f2f2;border-radius:6px;"></div><svg style="left:1656px;top:734px" width="18" height="17" viewBox="0 0 18 17"><path d="M1.8 1.8 L16.2 15.6 M16.2 1.8 L1.8 15.6" stroke="#f08795" stroke-width="2.9" stroke-linecap="round" fill="none"/></svg><span class="t" style="left:1682.2px;top:733px;font-size:18.2px;line-height:20px;transform:scaleX(0.9476);transform-origin:0 0;color:#ea8f9c;">5 Errors</span><div style="position:absolute;left:1761px;top:727px;width:142.5px;height:38px;background:#fdeedd;border-radius:6px;"></div><svg style="left:1774px;top:734px" width="21" height="19" viewBox="0 0 21 19" fill="none" stroke="#fa8c1e" stroke-width="1.5" stroke-linejoin="round"><path d="M10.5 1.3 L19.8 17.5 H1.2Z"/><path d="M10.5 7 V12.3 M10.5 14 V15.6" stroke-width="1.4"/></svg><span class="t" style="left:1802.2px;top:733px;font-size:18.2px;line-height:20px;transform:scaleX(0.9845);transform-origin:0 0;color:#fa8c1e;">9 Warnings</span><div style="position:absolute;left:434px;top:772px;width:1482px;height:44px;background:#f5f5f5;border-bottom:1px solid #dedede;border-top:1px solid #ececec;"></div><div style="position:absolute;left:481px;top:773px;width:1px;height:42px;background:#e3e3e3;"></div><div style="position:absolute;left:661px;top:773px;width:1px;height:42px;background:#e3e3e3;"></div><div style="position:absolute;left:841px;top:773px;width:1px;height:42px;background:#e3e3e3;"></div><div style="position:absolute;left:1066px;top:773px;width:1px;height:42px;background:#e3e3e3;"></div><div style="position:absolute;left:1734px;top:773px;width:1px;height:42px;background:#e3e3e3;"></div><div style="position:absolute;left:1915px;top:773px;width:1px;height:42px;background:#e3e3e3;"></div><span class="t" style="left:493.2px;top:785px;font-size:18.2px;line-height:20px;transform:scaleX(0.9784);transform-origin:0 0;color:#2b2b2b;-webkit-text-stroke:0.55px #2b2b2b;">Rule</span><span class="t" style="left:673.2px;top:785px;font-size:18.2px;line-height:20px;letter-spacing:0.989px;color:#2b2b2b;-webkit-text-stroke:0.55px #2b2b2b;">Module</span><span class="t" style="left:853.2px;top:785px;font-size:18.2px;line-height:20px;letter-spacing:0.094px;color:#2b2b2b;-webkit-text-stroke:0.55px #2b2b2b;">Element</span><span class="t" style="left:1078.2px;top:785px;font-size:18.2px;line-height:20px;letter-spacing:-0.119px;color:#2b2b2b;-webkit-text-stroke:0.55px #2b2b2b;">Message</span><span class="t" style="left:1747.2px;top:785px;font-size:18.2px;line-height:20px;letter-spacing:0.458px;color:#2b2b2b;-webkit-text-stroke:0.55px #2b2b2b;">Validator</span><svg style="left:447px;top:825px" width="20.6" height="17.8" viewBox="0 0 22 18"><path d="M9.3 1.2 a2 2 0 0 1 3.4 0 L21 15 a1.8 1.8 0 0 1 -1.6 2.7 H2.6 a1.8 1.8 0 0 1 -1.6-2.7Z" fill="#e6e01e"/><path d="M11 5.5 V11.4 M11 13.4 V15.2" stroke="#4a4a20" stroke-width="1.7"/></svg><span class="t" style="left:493.5px;top:826px;font-size:18.2px;line-height:20px;transform:scaleX(0.9885);transform-origin:0 0;color:#0078d4;width:168.24029666979362px;overflow:hidden;-webkit-text-stroke:0.45px #0078d4;">ContainerType_Minimum</span><span class="t" style="left:673.2px;top:826px;font-size:18.2px;line-height:20px;transform:scaleX(0.9580);transform-origin:0 0;color:#1a1a1a;">BswIf</span><span class="t" style="left:853.2px;top:826px;font-size:18.2px;line-height:20px;letter-spacing:0.174px;color:#1a1a1a;">ApiMappings</span><span class="t" style="left:1078.2px;top:826px;font-size:18.2px;line-height:20px;letter-spacing:-0.043px;color:#1a1a1a;">Container &#x27;ApiMappings&#x27;: No child containers added.</span><div style="position:absolute;left:434px;top:853px;width:1482px;height:2px;background:#e5e5e5;"></div><div style="position:absolute;left:434px;top:847px;width:48px;height:1px;background:#dadada;"></div><svg style="left:447px;top:862px" width="20.6" height="17.8" viewBox="0 0 22 18"><path d="M9.3 1.2 a2 2 0 0 1 3.4 0 L21 15 a1.8 1.8 0 0 1 -1.6 2.7 H2.6 a1.8 1.8 0 0 1 -1.6-2.7Z" fill="#e6e01e"/><path d="M11 5.5 V11.4 M11 13.4 V15.2" stroke="#4a4a20" stroke-width="1.7"/></svg><span class="t" style="left:493.5px;top:863px;font-size:18.2px;line-height:20px;transform:scaleX(0.9885);transform-origin:0 0;color:#0078d4;width:168.24029666979362px;overflow:hidden;-webkit-text-stroke:0.45px #0078d4;">ContainerType_Minimum</span><span class="t" style="left:673.2px;top:863px;font-size:18.2px;line-height:20px;transform:scaleX(0.9580);transform-origin:0 0;color:#1a1a1a;">BswIf</span><span class="t" style="left:853.2px;top:863px;font-size:18.2px;line-height:20px;transform:scaleX(0.9792);transform-origin:0 0;color:#1a1a1a;">ApiSignatures</span><span class="t" style="left:1078.2px;top:863px;font-size:18.2px;line-height:20px;transform:scaleX(0.9873);transform-origin:0 0;color:#1a1a1a;">Container &#x27;ApiSignatures&#x27;: No child containers added.</span><div style="position:absolute;left:434px;top:890px;width:1482px;height:2px;background:#e5e5e5;"></div><div style="position:absolute;left:434px;top:884px;width:48px;height:1px;background:#dadada;"></div><svg style="left:447px;top:899.5px" width="20.6" height="17.8" viewBox="0 0 22 18"><path d="M9.3 1.2 a2 2 0 0 1 3.4 0 L21 15 a1.8 1.8 0 0 1 -1.6 2.7 H2.6 a1.8 1.8 0 0 1 -1.6-2.7Z" fill="#e6e01e"/><path d="M11 5.5 V11.4 M11 13.4 V15.2" stroke="#4a4a20" stroke-width="1.7"/></svg><span class="t" style="left:493.5px;top:900.5px;font-size:18.2px;line-height:20px;transform:scaleX(0.9885);transform-origin:0 0;color:#0078d4;width:168.24029666979362px;overflow:hidden;-webkit-text-stroke:0.45px #0078d4;">ContainerType_Minimum</span><span class="t" style="left:673.2px;top:900.5px;font-size:18.2px;line-height:20px;transform:scaleX(0.9580);transform-origin:0 0;color:#1a1a1a;">BswIf</span><span class="t" style="left:853.2px;top:900.5px;font-size:18.2px;line-height:20px;transform:scaleX(0.9476);transform-origin:0 0;color:#1a1a1a;">DataTypes</span><span class="t" style="left:1078.2px;top:900.5px;font-size:18.2px;line-height:20px;transform:scaleX(0.9805);transform-origin:0 0;color:#1a1a1a;">Container &#x27;DataTypes&#x27;: No child containers added.</span><div style="position:absolute;left:434px;top:927px;width:1482px;height:2px;background:#e5e5e5;"></div><div style="position:absolute;left:434px;top:922px;width:48px;height:1px;background:#dadada;"></div><div style="position:absolute;left:530px;top:938px;width:85px;height:33px;background:linear-gradient(#f0f0f0,#e3e3e3);border:1px solid #acacac;"></div><span class="t" style="left:540.2px;top:946px;font-size:18.2px;line-height:20px;transform:scaleX(0.9680);transform-origin:0 0;color:#1a1a1a;">Console</span><div style="position:absolute;left:432px;top:938px;width:99px;height:36px;background:#fff;border:1px solid #a3a3a3;border-top:none;"></div><span class="t" style="left:442.2px;top:946px;font-size:18.2px;line-height:20px;letter-spacing:0.119px;color:#1a1a1a;">Violations</span><div style="position:absolute;left:0px;top:974px;width:1920px;height:34px;background:#eef4fd;border-top:1px solid #c9dcf3;"></div><span class="t" style="left:4.2px;top:983px;font-size:18.2px;line-height:20px;transform:scaleX(0.9300);transform-origin:0 0;color:#1a1a1a;">Ready</span><div style="position:absolute;left:60px;top:978px;width:2px;height:27px;background:linear-gradient(90deg,#2d2d2d 50%,#a9adb4 50%);"></div><div style="position:absolute;left:230px;top:978px;width:2px;height:27px;background:linear-gradient(90deg,#2d2d2d 50%,#a9adb4 50%);"></div><div style="position:absolute;left:358px;top:978px;width:2px;height:27px;background:linear-gradient(90deg,#2d2d2d 50%,#a9adb4 50%);"></div><svg style="left:69px;top:983px" width="21" height="17.5" viewBox="0 0 23 19">
<defs><linearGradient id="pg2" x1="0" y1="0" x2="0" y2="1"><stop offset="0" stop-color="#a9bfd8"/><stop offset="1" stop-color="#6d8aaa"/></linearGradient></defs>
<path d="M0.3 1.2 a1 1 0 0 1 1-1 H8.2 L10 2.6 H0.3Z" fill="#5f7d8e"/>
<rect x="0.3" y="2.6" width="22.4" height="16" rx="1" fill="url(#pg2)"/>
<path d="M6 7.6 H12.5 M6 10 H12.5 M6 12.6 H17.5 M6 15.2 H17.5" stroke="#fff" stroke-width="1.5"/><rect x="14" y="6.8" width="3.5" height="3.9" fill="#fff"/></svg><span class="t" style="left:97.2px;top:983px;font-size:18.2px;line-height:20px;transform:scaleX(0.9338);transform-origin:0 0;color:#1a1a1a;">Diagnostic_ECU</span><svg style="left:240px;top:983.4px" width="17" height="17" viewBox="0 0 20 20" fill="#22a7ea"><rect x="0.3" y="0.6" width="5.2" height="5.2" rx="0.4"/><rect x="7.1" y="0.6" width="5.2" height="5.2" rx="0.4"/><rect x="13.9" y="0.6" width="5.2" height="5.2" rx="0.4"/><rect x="0.3" y="7.199999999999999" width="5.2" height="5.2" rx="0.4"/><rect x="7.1" y="7.199999999999999" width="5.2" height="5.2" rx="0.4"/><rect x="13.9" y="7.199999999999999" width="5.2" height="5.2" rx="0.4"/><rect x="0.3" y="13.799999999999999" width="5.2" height="5.2" rx="0.4"/><rect x="7.1" y="13.799999999999999" width="5.2" height="5.2" rx="0.4"/><rect x="13.9" y="13.799999999999999" width="5.2" height="5.2" rx="0.4"/></svg><span class="t" style="left:267px;top:983px;font-size:18.2px;line-height:20px;color:#1a1a1a;">7</span><span class="t" style="left:281.2px;top:983px;font-size:18.2px;line-height:20px;letter-spacing:0.142px;color:#7a7a7a;">Modules</span><svg style="left:367px;top:981.5px" width="20" height="20" viewBox="0 0 20 20"><path d="M10 2 L18 10 L10 18 L2 10Z" fill="#d13438" stroke="#d13438" stroke-width="1.6" stroke-linejoin="round"/><path d="M10 5.4 V11.2 M10 13.2 V14.9" stroke="#fbc7c7" stroke-width="1.8"/></svg><span class="t" style="left:393.5px;top:983px;font-size:18.2px;line-height:20px;color:#e81123;">0</span><svg style="left:413px;top:983px" width="19" height="16" viewBox="0 0 22 18"><path d="M9.3 1.2 a2 2 0 0 1 3.4 0 L21 15 a1.8 1.8 0 0 1 -1.6 2.7 H2.6 a1.8 1.8 0 0 1 -1.6-2.7Z" fill="#e6e01e"/><path d="M11 5.5 V11.4 M11 13.4 V15.2" stroke="#4a4a20" stroke-width="1.7"/></svg><span class="t" style="left:439.5px;top:983px;font-size:18.2px;line-height:20px;color:#f57c00;">0</span><svg style="left:457.6px;top:985.1px" width="13" height="13" viewBox="0 0 13 13"><circle cx="6.5" cy="6.5" r="6" fill="#22c55e"/></svg><span class="t" style="left:477.2px;top:983px;font-size:18.2px;line-height:20px;letter-spacing:0.104px;color:#1e6f46;">Online</span><span class="t" style="left:1868.2px;top:983px;font-size:18.2px;line-height:20px;transform:scaleX(0.9148);transform-origin:0 0;color:#6a6a6a;">Ready</span></body></html>
